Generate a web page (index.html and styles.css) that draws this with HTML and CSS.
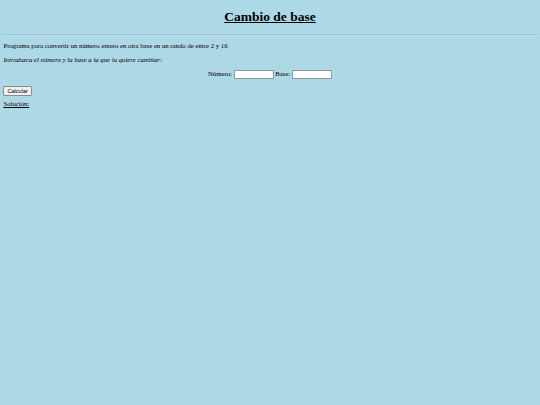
FILE: index.html
```html
<!DOCTYPE html>
<html lang="es">
<head>
<meta charset="UTF-8" />
<title>Cambio de base</title>
<link rel="stylesheet" href="styles.css">
</head>
<body>
  <h1 class="title">Cambio de base</h1>
  <hr class="rule">
  <p>Programa para convertir un número entero en otra base en un rando de entre 2 y 16</p>
  <p class="hint">Introduzca el número y la base a la que la quiere cambiar:</p>
  <form class="form" onsubmit="return false">
    <p class="fields">
      Número: <input type="text" id="numero" class="field">
      Base: <input type="text" id="base" class="field">
    </p>
    <button type="button" id="calcular" class="btn">Calcular</button>
    <p class="result"><u>Solución:</u> <span id="solucion"></span></p>
  </form>

  <script>
    document.getElementById('calcular').addEventListener('click', function() {
      var n = parseInt(document.getElementById('numero').value, 10);
      var b = parseInt(document.getElementById('base').value, 10);
      var out = document.getElementById('solucion');
      if (isNaN(n) || isNaN(b) || b < 2 || b > 16) {
        out.textContent = 'datos no válidos';
        return;
      }
      out.textContent = n.toString(b).toUpperCase();
    });
  </script>
</body>
</html>
```

FILE: styles.css
```css
html {
  background: #add8e6;
}
body {
  margin: 0.5em;
  font-family: "Liberation Serif", "Times New Roman", serif;
  font-size: 6.75px;
  color: #000;
}
.title {
  font-size: 2em;
  margin: 0.45em 0 0.6em;
  text-align: center;
  text-decoration: underline;
}
.rule {
  margin: 0.5em 0 0.3em;
  border: 0;
  border-top: 1px solid #9cc2cf;
  border-bottom: 1px solid #b9e0ec;
}
p {
  margin: 1em 0;
}
.hint {
  font-style: italic;
}
.fields {
  text-align: center;
}
.field {
  width: 40px;
  height: 9px;
  padding: 0 1px;
  box-sizing: border-box;
  border: 1px solid #8a9aa2;
  background: #fff;
  font-size: 5.6px;
  vertical-align: middle;
}
.btn {
  font-family: "Liberation Sans", Arial, sans-serif;
  font-size: 5.6px;
  padding: 1px 3px;
  height: 10px;
  border: 1px solid #8a8a8a;
  border-radius: 1px;
  background: #efefef;
  color: #000;
}
.result {
  margin-top: 0.7em;
}
```
